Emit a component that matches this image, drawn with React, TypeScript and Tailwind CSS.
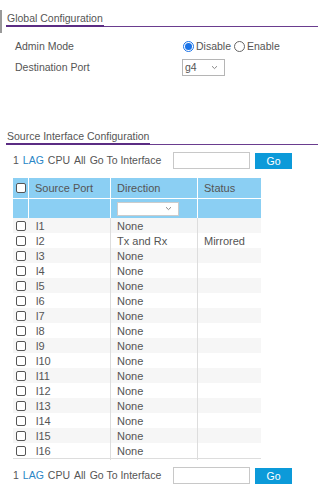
import React from 'react';

const rows: { port: string; dir: string; status: string }[] = [
  { port: 'l1', dir: 'None', status: '' },
  { port: 'l2', dir: 'Tx and Rx', status: 'Mirrored' },
  { port: 'l3', dir: 'None', status: '' },
  { port: 'l4', dir: 'None', status: '' },
  { port: 'l5', dir: 'None', status: '' },
  { port: 'l6', dir: 'None', status: '' },
  { port: 'l7', dir: 'None', status: '' },
  { port: 'l8', dir: 'None', status: '' },
  { port: 'l9', dir: 'None', status: '' },
  { port: 'l10', dir: 'None', status: '' },
  { port: 'l11', dir: 'None', status: '' },
  { port: 'l12', dir: 'None', status: '' },
  { port: 'l13', dir: 'None', status: '' },
  { port: 'l14', dir: 'None', status: '' },
  { port: 'l15', dir: 'None', status: '' },
  { port: 'l16', dir: 'None', status: '' },
];

const Chevron = () => (
  <svg width="7" height="5" viewBox="0 0 7 5" className="text-[#888]">
    <path d="M1 1.2 L3.5 3.6 L6 1.2" fill="none" stroke="currentColor" strokeWidth="1" />
  </svg>
);

const Checkbox = () => (
  <span className="block w-[10px] h-[10px] rounded-[2px] border border-[#555] bg-white" />
);

const Radio = ({ checked }: { checked?: boolean }) =>
  checked ? (
    <span className="flex items-center justify-center w-[11px] h-[11px] rounded-full border border-[#1a73e8] bg-white">
      <span className="block w-[7px] h-[7px] rounded-full bg-[#1a73e8]" />
    </span>
  ) : (
    <span className="block w-[11px] h-[11px] rounded-full border border-[#666] bg-white" />
  );

const SectionTitle = ({ title }: { title: string }) => (
  <div className="flex-1 flex items-end border-b border-[#6a3d8f]">
    <span className="block pl-[1px] pr-[1px] leading-[14px] border-b-2 border-[#5b2c83] -mb-px">
      {title}
    </span>
  </div>
);

const Toolbar = () => (
  <div className="flex items-center h-[17px] pl-[13px]">
    <div className="flex gap-[4px] w-[160px]">
      <span>1</span>
      <span className="text-[#2a86c6]">LAG</span>
      <span>CPU</span>
      <span>All</span>
      <span>Go To Interface</span>
    </div>
    <div className="w-[77px] h-[17px] border border-[#c8c8c8] bg-white" />
    <button className="ml-[5px] w-[37px] h-[16px] bg-[#0c9ad9] text-white text-[10.5px] leading-[16px]">Go</button>
  </div>
);

export default function App() {
  return (
    <div
      className="w-[318px] h-[502px] bg-white text-[#555] text-[10.5px] overflow-hidden"
      style={{ fontFamily: '"Liberation Sans", Arial, sans-serif' }}
    >
      <div className="pt-[10px] flex items-start">
        <div className="w-[2px] h-[23px] bg-[#999]" />
        <div className="ml-[4px] mt-[1px] flex-1 flex">
          <SectionTitle title="Global Configuration" />
        </div>
      </div>

      <div className="mt-[3px]">
        <div className="flex items-center h-[21px]">
          <div className="w-[183px] pl-[15px]">Admin Mode</div>
          <div className="flex items-center">
            <Radio checked />
            <span className="ml-[2px]">Disable</span>
            <span className="ml-[3px]"><Radio /></span>
            <span className="ml-[2px]">Enable</span>
          </div>
        </div>
        <div className="flex items-center h-[21px]">
          <div className="w-[182px] pl-[15px]">Destination Port</div>
          <div className="flex items-center justify-between w-[43px] h-[17px] border border-[#b5b5b5] pl-[2px] pr-[6px]">
            <span>g4</span>
            <Chevron />
          </div>
        </div>
      </div>

      <div className="mt-[51px] pl-[6px] flex">
        <SectionTitle title="Source Interface Configuration" />
      </div>

      <div className="mt-[7px]">
        <Toolbar />
      </div>

      <div className="mt-[9px] ml-[13px] w-[248px] text-[11px]">
        <div className="grid grid-cols-[16px_82px_87px_63px] bg-[#8bcff3] h-[20px]">
          <div className="flex items-center pl-[3px] border-r border-white"><Checkbox /></div>
          <div className="flex items-center pl-[6px] border-r border-white">Source Port</div>
          <div className="flex items-center pl-[6px] border-r border-white">Direction</div>
          <div className="flex items-center pl-[6px]">Status</div>
        </div>
        <div className="grid grid-cols-[16px_82px_87px_63px] bg-[#8bcff3] h-[20px] border-t border-white">
          <div className="border-r border-white" />
          <div className="border-r border-white" />
          <div className="flex items-center pl-[6px] border-r border-white">
            <div className="flex items-center justify-between w-[62px] h-[14px] bg-white border border-[#ccc] pr-[6px]">
              <span />
              <Chevron />
            </div>
          </div>
          <div />
        </div>
        <div className="border-b border-[#ddd]">
          {rows.map((r, i) => (
            <div
              key={r.port}
              className={`grid grid-cols-[16px_82px_87px_63px] h-[15px] ${i % 2 === 0 ? 'bg-[#f6f6f6]' : 'bg-white'}`}
            >
              <div className="flex items-center pl-[3px]"><Checkbox /></div>
              <div className="flex items-center pl-[7px] border-r border-[#ddd]">{r.port}</div>
              <div className="flex items-center pl-[6px] border-r border-[#ddd]">{r.dir}</div>
              <div className="flex items-center pl-[6px]">{r.status}</div>
            </div>
          ))}
        </div>
      </div>

      <div className="mt-[8px]">
        <Toolbar />
      </div>
    </div>
  );
}
